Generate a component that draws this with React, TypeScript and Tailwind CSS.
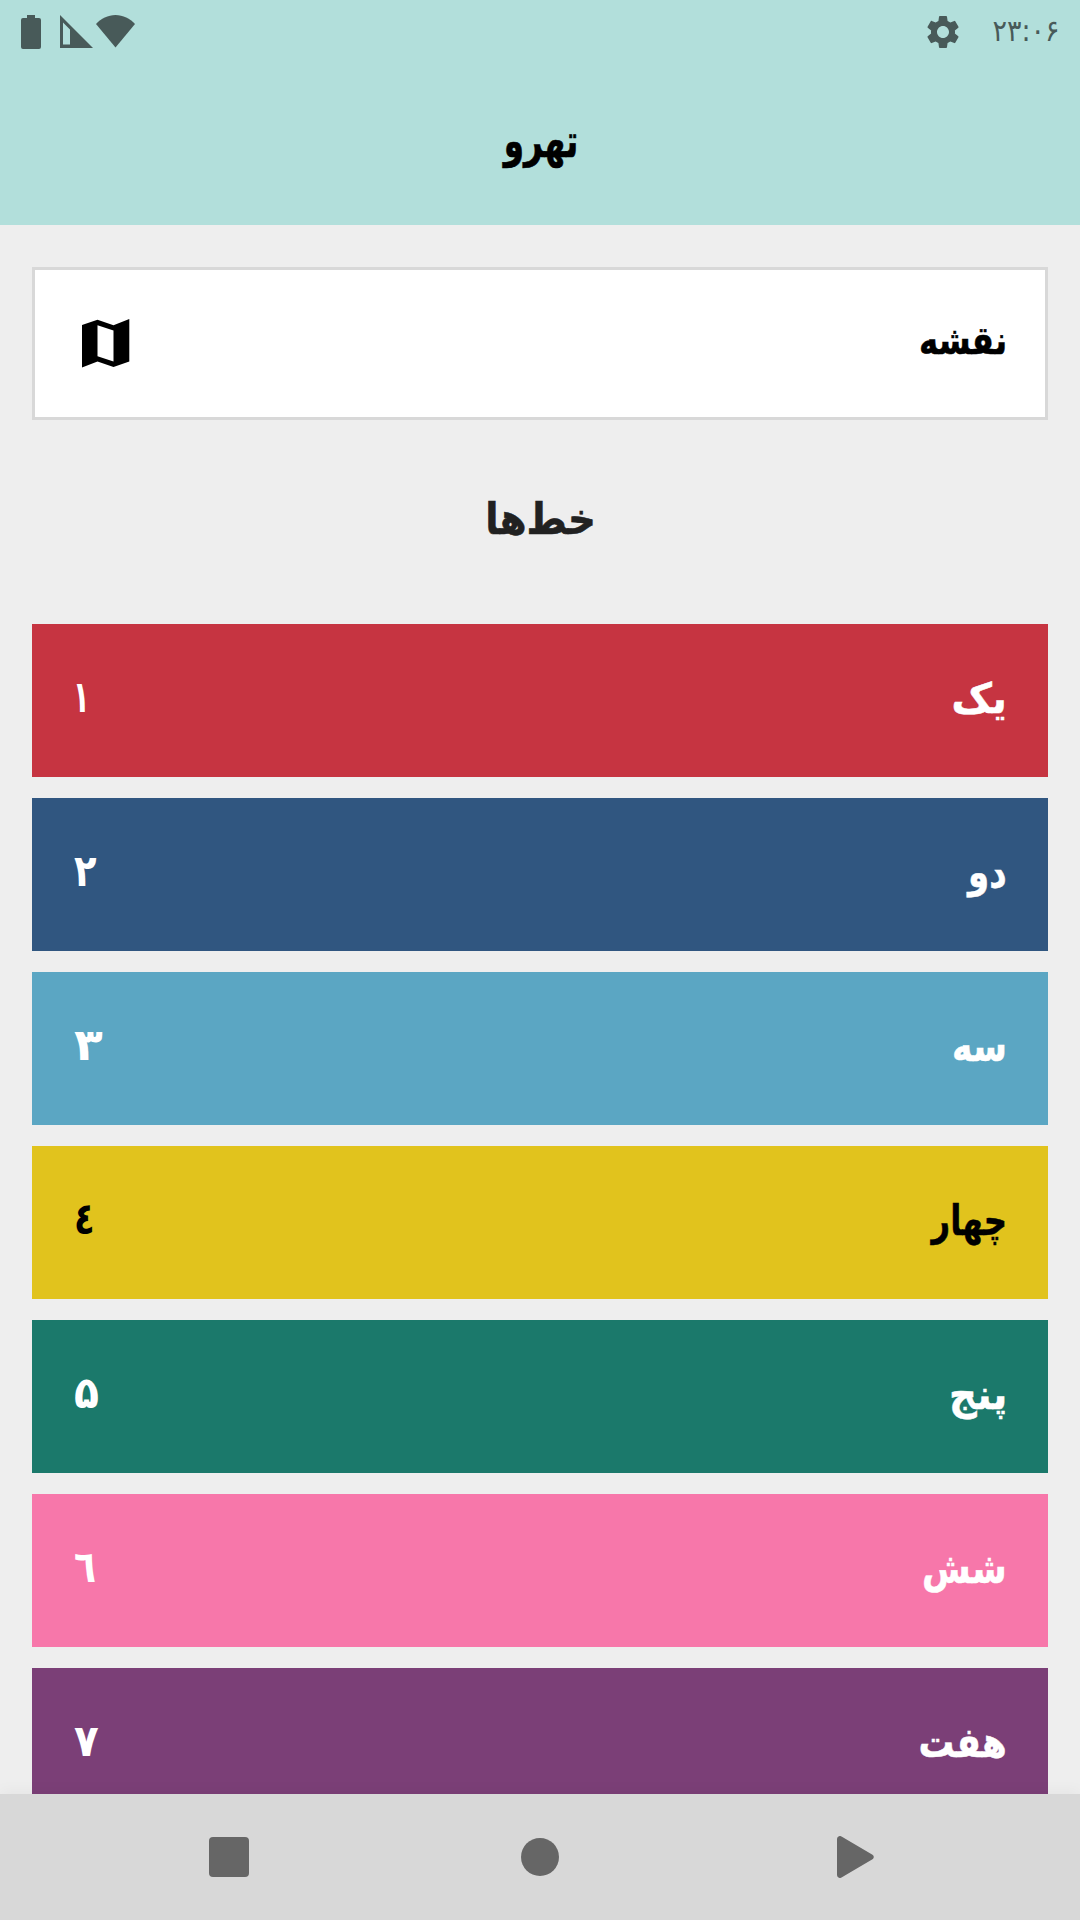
import { MdSettings } from 'react-icons/md';

const lines = [
  { name: 'یک', num: '۱', bg: 'bg-[#c63441]', fg: 'text-white', nameFit: 'scale-x-[0.94]', numFit: 'scale-x-[0.62] -ml-px' },
  { name: 'دو', num: '۲', bg: 'bg-[#305680]', fg: 'text-white', nameFit: 'scale-x-[0.81]', numFit: 'scale-x-[0.84]' },
  { name: 'سه', num: '۳', bg: 'bg-[#5ba6c3]', fg: 'text-white', nameFit: 'scale-x-[0.82]', numFit: 'scale-x-[1.07]' },
  { name: 'چهار', num: '٤', bg: 'bg-[#e1c31d]', fg: 'text-black', nameFit: 'scale-x-[0.77]', numFit: 'scale-x-[0.77]' },
  { name: 'پنج', num: '۵', bg: 'bg-[#1b796b]', fg: 'text-white', nameFit: 'scale-x-[0.92]', numFit: 'scale-x-[0.93]' },
  { name: 'شش', num: '٦', bg: 'bg-[#f777aa]', fg: 'text-white', nameFit: 'scale-x-[0.84]', numFit: 'scale-x-[0.82]' },
  { name: 'هفت', num: '۷', bg: 'bg-[#7b3f77]', fg: 'text-white', nameFit: 'scale-x-[0.85]', numFit: 'scale-x-[0.92]' },
];

function StatusBar() {
  return (
    <div className="flex h-[63px] items-center justify-between pr-[20px] pl-[21px] text-[#485a59]">
      <div className="flex items-center">
        <svg width="20" height="34" viewBox="0 0 20 34" fill="currentColor">
          <path d="M6 0h8v3h4a2 2 0 0 1 2 2v27a2 2 0 0 1-2 2H2a2 2 0 0 1-2-2V5a2 2 0 0 1 2-2h4z" />
        </svg>
        <svg className="ml-[19px]" width="33" height="33" viewBox="0 0 33 33" fill="currentColor">
          <path fillRule="evenodd" d="M0 0l33 33H0zM3 7.5V29.500h7V14.500z" />
        </svg>
        <svg className="ml-[3px]" width="39" height="33" viewBox="0 0 39 33" fill="currentColor">
          <path d="M0 9C5 3.500 12 0 19.500 0S34 3.500 39 9L19.500 32.500z" />
        </svg>
      </div>
      <div className="flex items-center">
        <MdSettings className="mr-[22px] size-[40px]" />
        <span className="mb-0.5 origin-right scale-x-[0.9] text-[30px] leading-none" dir="rtl">۲۳:۰۶</span>
      </div>
    </div>
  );
}

export default function App() {
  return (
    <div className="flex h-[1920px] w-[1080px] flex-col overflow-hidden bg-[#eeeeee] font-['DejaVu_Sans',sans-serif]">
      <header className="h-[225px] shrink-0 bg-[#b2dfdb]">
        <StatusBar />
        <h1 dir="rtl" className="mt-[48px] ml-[2px] origin-center scale-x-[0.71] text-center text-[46px] leading-[60px] font-bold [-webkit-text-stroke:0.7px]">تهرو</h1>
      </header>
      <main className="min-h-0 flex-1 overflow-hidden px-8 pt-[42px]" dir="rtl">
        <div className="flex h-[153px] items-center justify-between border-[3px] border-[#d8d8d8] bg-white pr-[38px] pl-[47px] text-[39px] font-bold">
          <span className="origin-right scale-x-[0.83] pb-1 [-webkit-text-stroke:0.5px]">نقشه</span>
          <svg width="48" height="49" viewBox="0 0 48 49">
            <path fillRule="evenodd" d="M0 6L15.500 0.700 31.500 6.200 47.300 0V42.500L31.500 48 15.500 42.500 0 48.500zM15.500 6.200V37.200L31.500 42.500V11.500z" />
          </svg>
        </div>
        <h2 className="flex h-[204px] items-center justify-center pb-1.5 text-[43px] font-bold text-[#212121]">
          <span className="scale-x-[0.9] [-webkit-text-stroke:0.6px]">خط‌ها</span>
        </h2>
        <div className="flex flex-col gap-[21px]">
          {lines.map((l) => (
            <div key={l.num} className={`flex h-[153px] shrink-0 items-center justify-between pr-[41px] pb-2 pl-[42px] text-[42px] font-bold ${l.bg} ${l.fg}`}>
              <span className={`origin-right pt-[3px] [-webkit-text-stroke:0.5px] ${l.nameFit}`}>{l.name}</span>
              <span className={`origin-left text-[44px] ${l.numFit}`}>{l.num}</span>
            </div>
          ))}
        </div>
      </main>
      <nav className="relative flex h-[126px] shrink-0 items-center bg-[#d8d8d8] pl-[209px] text-[#666666] shadow-[0_-3px_14px_rgba(0,0,0,0.04)]">
        <div className="size-10 rounded bg-[#666666]" />
        <div className="ml-[272px] size-[38px] rounded-full bg-[#666666]" />
        <svg className="ml-[278px]" width="38" height="42" viewBox="0 0 38 42" fill="currentColor">
          <path d="M0 3a3 3 0 0 1 4.500-2.600L35.500 18.700a2.700 2.700 0 0 1 0 4.600L4.500 41.600A3 3 0 0 1 0 39z" />
        </svg>
      </nav>
    </div>
  );
}
